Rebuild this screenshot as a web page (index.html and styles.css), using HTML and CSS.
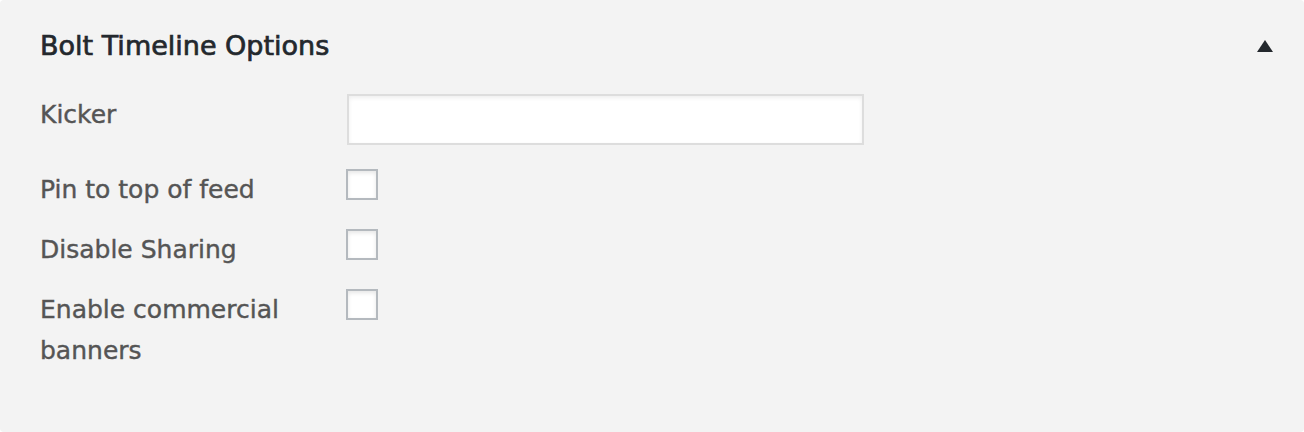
FILE: index.html
```html
<!DOCTYPE html>
<html lang="en">
<head>
<meta charset="utf-8">
<title>Bolt Timeline Options</title>
<link rel="stylesheet" href="styles.css">
</head>
<body>
<div class="postbox">
  <div class="hndle">
    <h2 class="title">Bolt Timeline Options</h2>
    <button class="toggle" type="button" aria-label="Toggle panel">
      <svg width="16" height="12" viewBox="0 0 16 12"><polygon points="8,0 16,12 0,12" fill="#23282d"/></svg>
    </button>
  </div>
  <div class="inside">
    <div class="row row-text">
      <label class="label" for="kicker">Kicker</label>
      <input class="text-input" id="kicker" type="text">
    </div>
    <div class="row">
      <label class="label" for="pin">Pin to top of feed</label>
      <input class="check" id="pin" type="checkbox">
    </div>
    <div class="row">
      <label class="label" for="share">Disable Sharing</label>
      <input class="check" id="share" type="checkbox">
    </div>
    <div class="row">
      <label class="label" for="banners">Enable commercial banners</label>
      <input class="check" id="banners" type="checkbox">
    </div>
  </div>
</div>
</body>
</html>
```

FILE: styles.css
```css
html, body {
  margin: 0;
  padding: 0;
  background: #ffffff;
}

body {
  font-family: "DejaVu Sans", "Liberation Sans", sans-serif;
}

.postbox {
  width: 1304px;
  height: 432px;
  box-sizing: border-box;
  background: #f3f3f3;
  border-radius: 4px;
  padding: 30px 31px 0 40px;
}

.hndle {
  display: flex;
  align-items: center;
  justify-content: space-between;
  height: 32px;
}

.title {
  margin: 0;
  font-size: 27px;
  line-height: 32px;
  font-weight: normal;
  color: #23282d;
  -webkit-text-stroke: 0.7px #23282d;
}

.toggle {
  border: 0;
  background: none;
  padding: 0;
  width: 16px;
  height: 12px;
  display: flex;
}

.inside {
  margin-top: 32px;
  display: flex;
  flex-direction: column;
  gap: 19px;
}

.row {
  display: grid;
  grid-template-columns: 306px 1fr;
  align-items: start;
}

.row-text {
  margin-bottom: 5px;
}

.label {
  font-size: 25px;
  line-height: 41px;
  color: #555555;
  -webkit-text-stroke: 0.4px #555555;
  padding-right: 24px;
}

.text-input {
  margin: 0 0 0 1px;
  width: 517px;
  height: 51px;
  box-sizing: border-box;
  border: 2px solid #dddddd;
  background: #ffffff;
  box-shadow: inset 0 2px 4px rgba(0, 0, 0, 0.07);
  outline: none;
}

.check {
  -webkit-appearance: none;
  appearance: none;
  margin: 0;
  width: 32px;
  height: 31px;
  box-sizing: border-box;
  border: 2px solid #b4b9be;
  background: #ffffff;
  box-shadow: inset 0 2px 4px rgba(0, 0, 0, 0.1);
}
```
